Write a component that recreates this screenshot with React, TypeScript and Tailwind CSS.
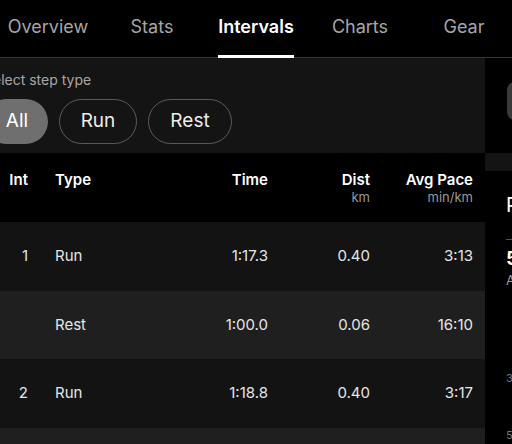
import React from 'react';

const tabs = ['Overview', 'Stats', 'Intervals', 'Charts', 'Gear'];

const rows = [
  { int: '1', type: 'Run', time: '1:17.3', dist: '0.40', pace: '3:13' },
  { int: '', type: 'Rest', time: '1:00.0', dist: '0.06', pace: '16:10' },
  { int: '2', type: 'Run', time: '1:18.8', dist: '0.40', pace: '3:17' },
];

const App: React.FC = () => {
  return (
    <div className="w-[512px] h-[444px] bg-black overflow-hidden font-['Inter','Noto_Sans',sans-serif]">
      {/* tab bar */}
      <div className="flex h-[58px] border-b border-[#363636] -ml-[4px]">
        {tabs.map(tab => (
          <div key={tab} className="w-[104px] flex justify-center flex-shrink-0">
            <div className="relative h-full pt-[15px]">
              <span
                className={`text-[18px] leading-[24px] ${
                  tab === 'Intervals' ? 'text-white font-semibold' : 'text-[#a6a6a6]'
                }`}
              >
                {tab}
              </span>
              {tab === 'Intervals' && (
                <div className="absolute left-0 right-0 -bottom-px h-[3px] bg-white" />
              )}
            </div>
          </div>
        ))}
      </div>

      <div className="flex">
        {/* left: filter + table */}
        <div className="w-[485px] flex-shrink-0">
          <div className="bg-[#141414] h-[95px] pt-[13px]">
            <div className="-ml-[16px] text-[14px] leading-[18px] text-[#a8a8a8] whitespace-nowrap">Select step type</div>
            <div className="flex gap-[11px] mt-[10px] -ml-[16px]">
              <div className="h-[45px] w-[64px] rounded-full bg-[#6f6f6f] flex items-center justify-center pl-[2px] text-[19px] text-white">
                All
              </div>
              <div className="h-[45px] w-[78px] rounded-full border border-[#5a5a5a] flex items-center justify-center text-[19px] text-[#ececec]">
                Run
              </div>
              <div className="h-[45px] w-[84px] rounded-full border border-[#5a5a5a] flex items-center justify-center text-[19px] text-[#ececec]">
                Rest
              </div>
            </div>
          </div>

          {/* table header */}
          <div className="bg-black h-[69px] pt-[17px] grid grid-cols-[55px_115px_98px_102px_103px] text-[15px] font-semibold text-white leading-[19px]">
            <div className="text-right pr-[27px]">Int</div>
            <div>Type</div>
            <div className="text-right">Time</div>
            <div className="text-right">
              Dist
              <div className="text-[13px] font-normal text-[#9a9a9a] leading-[17px]">km</div>
            </div>
            <div className="text-right">
              Avg Pace
              <div className="text-[13px] font-normal text-[#9a9a9a] leading-[17px]">min/km</div>
            </div>
          </div>

          {/* rows */}
          {rows.map((r, i) => (
            <div
              key={i}
              className={`h-[68.5px] grid grid-cols-[55px_115px_98px_102px_103px] items-center text-[15px] text-[#e6e6e6] ${
                i % 2 === 0 ? 'bg-[#131313]' : 'bg-[#1f1f1f]'
              }`}
            >
              <div className="text-right pr-[27px]">{r.int}</div>
              <div>{r.type}</div>
              <div className="text-right">{r.time}</div>
              <div className="text-right">{r.dist}</div>
              <div className="text-right">{r.pace}</div>
            </div>
          ))}
          <div className="h-[68.5px] bg-[#1f1f1f]" />
        </div>

        {/* right: next card peeking in */}
        <div className="flex-1 bg-black overflow-hidden">
          <div className="h-[95px] pt-[24px]">
            <div className="ml-[22px] w-[24px] h-[38px] rounded-[8px] bg-[#3a3a3a]" />
          </div>
          <div className="h-[18px] bg-[#141414]" />
          <div className="pl-[21px] whitespace-nowrap">
            <div className="mt-[22px] text-[20px] leading-[24px] text-white">Pace</div>
            <div className="mt-[22px] h-px bg-[#555]" />
            <div className="mt-[8px] text-[19px] leading-[22px] font-bold text-white">5:02</div>
            <div className="mt-[2px] text-[13px] leading-[16px] text-[#9a9a9a]">Avg</div>
            <div className="mt-[83px] text-[11px] leading-[14px] text-[#777]">3:00</div>
            <div className="mt-[43px] text-[11px] leading-[14px] text-[#777]">5:00</div>
          </div>
        </div>
      </div>
    </div>
  );
};

export default App;
